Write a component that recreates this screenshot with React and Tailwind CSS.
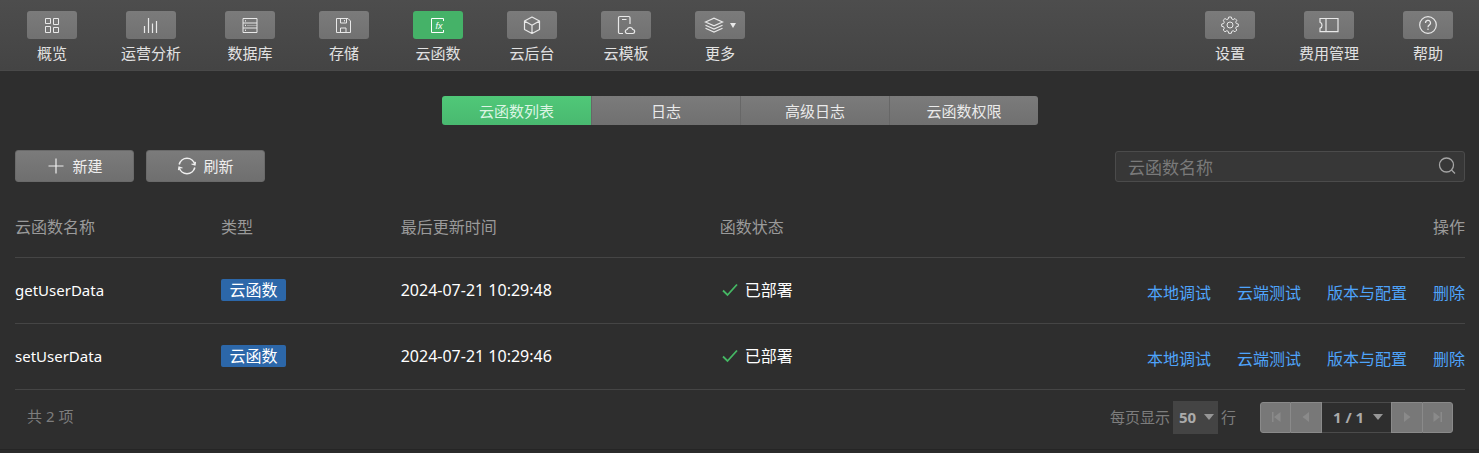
import React from "react";

function Icon({ children, className = "size-5", strokeWidth = 1 }) {
  return (
    <svg
      aria-hidden="true"
      viewBox="0 0 20 20"
      className={className}
      fill="none"
      stroke="currentColor"
      strokeWidth={strokeWidth}
    >
      {children}
    </svg>
  );
}

const icons = {
  overview: (
    <Icon>
      <path d="M3.500 3.500h5v5h-5zM11.500 3.500h5v6h-5zM3.500 11.500h5v6h-5zM11.500 12.500h5v5h-5z" />
    </Icon>
  ),
  analytics: (
    <Icon>
      <path d="M3.500 11v7M7.500 3v15M11.500 8.500V18M15.500 6v12" strokeWidth="1.200" />
    </Icon>
  ),
  database: (
    <Icon>
      <path d="M3 3.500h14v14H3zM3 8h14M3 13h14" />
      <path d="M5.500 5.200v1.300M5.500 9.800v1.300M5.500 14.600v1.300" />
      <path d="M7 10.500h10" strokeOpacity="0.400" />
    </Icon>
  ),
  storage: (
    <Icon>
      <path d="M2.500 3.500h11.500l2.500 2.500v11.500h-14zM6.500 3.500V8h6V3.500M6.500 17.500v-4.500h5.500v4.500M10.500 5v1.500" />
    </Icon>
  ),
  functions: (
    <Icon>
      <path d="M15.500 6V3.500h-12v14h12V15" />
      <text
        x="7.500"
        y="13.500"
        fontSize="9"
        fontStyle="italic"
        fontFamily="Liberation Sans, sans-serif"
        fill="currentColor"
        stroke="none"
      >
        fx
      </text>
    </Icon>
  ),
  backend: (
    <Icon strokeWidth={1.2}>
      <path d="M10 2l7.500 4v8.500L10 18.500l-7.500-4V6zM2.500 6l7.500 4.200L17.500 6M10 10.200v8.300" strokeLinejoin="round" />
    </Icon>
  ),
  template: (
    <Icon strokeWidth={1.2}>
      <path d="M7 18.500H3.800a1.300 1.300 0 0 1-1.300-1.300V2.800A1.300 1.300 0 0 1 3.800 1.500h8.900A1.300 1.300 0 0 1 14 2.800V9M6 4.500h4.500" />
      <path d="M11.500 18.500a2 2 0 0 1-.3-4 2.900 2.900 0 0 1 5.600 0 2 2 0 0 1-.3 4z" />
    </Icon>
  ),
  more: (
    <Icon strokeWidth={1.2}>
      <path d="M1.500 7L10 3.200 18.500 7 10 10.800zM1.500 10.200L10 14l8.500-3.800M1.500 13.200L10 17l8.500-3.800" />
    </Icon>
  ),
  settings: (
    <Icon>
      <circle cx="10" cy="10" r="3" />
      <path
        strokeLinejoin="round"
        d="M8.700 2h2.600l.5 2 1.400.6 1.800-1.100 1.800 1.800-1.100 1.800.6 1.400 2 .5v2.300l-2 .5-.6 1.400 1.100 1.800-1.800 1.800-1.800-1.100-1.400.6-.5 2H8.700l-.5-2-1.400-.6L5 16.800 3.200 15l1.100-1.800-.6-1.400-2-.5V9l2-.5.6-1.400-1.100-1.800L5 3.500l1.800 1.100L8.200 4z"
      />
    </Icon>
  ),
  billing: (
    <Icon strokeWidth={1.2}>
      <path d="M1 3.500h18v13.200H1v-3.500a3 3 0 0 0 2-3 3 3 0 0 0-2-3zM7 3.500v13.200" />
    </Icon>
  ),
  help: (
    <Icon strokeWidth={1.2}>
      <circle cx="10" cy="10" r="8.300" />
      <path d="M7.500 8a2.500 2.500 0 1 1 3.700 2.100c-.9.500-1.200 1-1.200 2.100M10 13.400v1.500" />
    </Icon>
  ),
};

const mainNav = [
  { icon: "overview", label: "概览" },
  { icon: "analytics", label: "运营分析" },
  { icon: "database", label: "数据库" },
  { icon: "storage", label: "存储" },
  { icon: "functions", label: "云函数", active: true },
  { icon: "backend", label: "云后台" },
  { icon: "template", label: "云模板" },
  { icon: "more", label: "更多", menu: true },
];

const sideNav = [
  { icon: "settings", label: "设置" },
  { icon: "billing", label: "费用管理" },
  { icon: "help", label: "帮助" },
];

function NavItem({ icon, label, active, menu }) {
  return (
    <button
      type="button"
      aria-current={active ? "page" : undefined}
      className="flex shrink-0 flex-col items-center gap-1 text-[15px] leading-5 text-[#e2e2e2]"
    >
      <span
        className={
          active
            ? "flex h-7 w-[50px] items-center justify-center rounded-[3px] bg-[#45b268] text-white"
            : "flex h-7 w-[50px] items-center justify-center rounded-[3px] bg-linear-to-b from-[#7b7b7b] to-[#717171] text-[#e8e8e8]"
        }
      >
        {icons[icon]}
        {menu && (
          <svg aria-hidden="true" viewBox="0 0 6 5" className="ml-1.5 h-[5px] w-1.5" fill="currentColor">
            <path d="M0 0h6L3 5z" />
          </svg>
        )}
      </span>
      <span className="whitespace-nowrap">{label}</span>
    </button>
  );
}

const tabs = ["云函数列表", "日志", "高级日志", "云函数权限"];

const rows = [
  { name: "getUserData", type: "云函数", updated: "2024-07-21 10:29:48", status: "已部署" },
  { name: "setUserData", type: "云函数", updated: "2024-07-21 10:29:46", status: "已部署" },
];

const actions = ["本地调试", "云端测试", "版本与配置", "删除"];

function Caret({ className }) {
  return (
    <svg
      aria-hidden="true"
      viewBox="0 0 10 6"
      className={"pointer-events-none absolute top-1/2 h-1.5 w-2.5 -translate-y-1/2 " + className}
      fill="#969696"
    >
      <path d="M0 0h10L5 6z" />
    </svg>
  );
}

function PageButton({ label, d, className }) {
  return (
    <button
      type="button"
      disabled
      aria-label={label}
      className={"flex items-center justify-center border-[#8a8a8a] bg-[#787878] text-[#8a8a8a] " + className}
    >
      <svg aria-hidden="true" viewBox="0 0 10 10" className="size-2.5" fill="currentColor">
        <path d={d} />
      </svg>
    </button>
  );
}

const toolButton =
  "flex h-8 w-[119px] items-center justify-center gap-1.5 rounded-[3px] border border-[#6a6a6a] bg-linear-to-b from-[#7b7b7b] to-[#6f6f6f] text-[15px] leading-5 text-[#eeeeee]";

export default function App() {
  return (
    <div className="flex min-h-screen flex-col bg-[#2e2e2e] font-['Noto_Sans','Noto_Sans_CJK_SC',sans-serif] text-white">
      <header className="flex justify-between border-b border-[#494949] bg-linear-to-b from-[#4d4d4d] to-[#444444] pt-[11px] pr-[26px] pb-[7px] pl-[27px]">
        <nav className="flex gap-11">
          {mainNav.map((item) => (
            <NavItem key={item.label} {...item} />
          ))}
        </nav>
        <nav className="flex gap-11">
          {sideNav.map((item) => (
            <NavItem key={item.label} {...item} />
          ))}
        </nav>
      </header>

      <main className="flex flex-col pt-[25px] pr-[14px] pb-[15px] pl-[15px]">
        <div
          role="tablist"
          className="grid h-[29px] w-full max-w-[596px] grid-cols-4 self-center overflow-hidden rounded-[3px]"
        >
          {tabs.map((tab, i) => (
            <button
              key={tab}
              type="button"
              role="tab"
              aria-selected={i === 0}
              className={
                i === 0
                  ? "bg-linear-to-b from-[#50c878] to-[#49b970] text-[15px] leading-5 text-[#dcf5e4]"
                  : "border-l border-[#676767] bg-linear-to-b from-[#7b7b7b] to-[#707070] text-[15px] leading-5 text-[#eaeaea]"
              }
            >
              {tab}
            </button>
          ))}
        </div>

        <div className="mt-[25px] flex items-center justify-between">
          <div className="flex gap-3">
            <button type="button" className={toolButton}>
              <Icon strokeWidth={1.2}>
                <path d="M2.500 10h15M10 2.500v15" />
              </Icon>
              新建
            </button>
            <button type="button" className={toolButton}>
              <Icon strokeWidth={1.6}>
                <path d="M2.200 8.500A8 8 0 0 1 17.800 8.500M17.800 11.500A8 8 0 0 1 2.200 11.500" />
                <path d="M14.500 8l3.500.9.500-3M5.500 12l-3.500-.9-.5 3" strokeWidth="1.200" />
              </Icon>
              刷新
            </button>
          </div>
          <label className="flex h-[31px] w-[350px] items-center rounded-[3px] border border-[#4b4b4b] bg-[#373737] pr-[7px] pl-3">
            <input
              type="text"
              aria-label="云函数名称"
              placeholder="云函数名称"
              className="min-w-0 flex-1 bg-transparent pt-1 text-[17px] leading-6 text-white outline-none placeholder:text-[#7a7a7a]"
            />
            <Icon className="size-5 text-[#a5a5a5]" strokeWidth={1.3}>
              <circle cx="9.500" cy="9" r="7" />
              <path d="M14.500 14l3.500 3.500" />
            </Icon>
          </label>
        </div>

        <table className="mt-[15px] w-full table-fixed border-collapse text-left text-base leading-6">
          <colgroup>
            <col className="w-[14.2%]" />
            <col className="w-[12.4%]" />
            <col className="w-[22%]" />
            <col className="w-[22%]" />
            <col />
          </colgroup>
          <thead>
            <tr className="h-[60px] border-b border-[#454545] text-[#9a9a9a]">
              <th className="font-normal">云函数名称</th>
              <th className="font-normal">类型</th>
              <th className="font-normal">最后更新时间</th>
              <th className="font-normal">函数状态</th>
              <th className="text-right font-normal">操作</th>
            </tr>
          </thead>
          <tbody>
            {rows.map((row) => (
              <tr key={row.name} className="h-[66px] border-b border-[#454545]">
                <td className="text-[15px]">{row.name}</td>
                <td>
                  <span className="flex h-[22px] w-[65px] items-center justify-center rounded-xs bg-[#2c67a9]">
                    {row.type}
                  </span>
                </td>
                <td>{row.updated}</td>
                <td>
                  <span className="flex items-center gap-[5px]">
                    <Icon className="size-5 text-[#45b864]" strokeWidth={1.8}>
                      <path d="M3 10.500l4.500 4.500L17 4.500" />
                    </Icon>
                    {row.status}
                  </span>
                </td>
                <td className="pt-1.5">
                  <div className="flex justify-end gap-[26px]">
                    {actions.map((action) => (
                      <a key={action} href="#" className="whitespace-nowrap text-[#4ea4fb]">
                        {action}
                      </a>
                    ))}
                  </div>
                </td>
              </tr>
            ))}
          </tbody>
        </table>

        <footer className="flex items-center justify-between px-3 pt-[11px] text-[15px] leading-5 text-[#7d7d7d]">
          <p className="pb-0.5">共 2 项</p>
          <div className="flex items-center gap-6">
            <label className="flex items-center gap-[3px]">
              每页显示
              <span className="relative">
                <select
                  defaultValue="50"
                  className="h-[33px] w-[45px] appearance-none bg-[#444444] pl-1.5 font-bold text-[#ababab]"
                >
                  <option>50</option>
                </select>
                <Caret className="right-1" />
              </span>
              行
            </label>
            <div className="flex h-[31px]">
              <PageButton label="第一页" d="M1 0h1.500v10H1zM9.500 0v10L3 5z" className="w-[31px] rounded-l-[3px] border" />
              <PageButton label="上一页" d="M8 0v10L1.500 5z" className="w-[31px] border border-l-0" />
              <span className="relative flex border-y border-[#4b4b4b]">
                <select
                  aria-label="页码"
                  defaultValue="1 / 1"
                  className="w-[69px] appearance-none bg-[#2e2e2e] pl-[11px] font-bold text-[#ababab]"
                >
                  <option>1 / 1</option>
                </select>
                <Caret className="right-2" />
              </span>
              <PageButton label="下一页" d="M2 0v10l6.500-5z" className="w-[31px] border border-r-0" />
              <PageButton label="最后一页" d="M7.500 0H9v10H7.500zM.5 0v10L7 5z" className="w-[31px] rounded-r-[3px] border" />
            </div>
          </div>
        </footer>
      </main>
      <div className="flex-1 border-t border-[#252525] bg-[#2b2b2b]" />
    </div>
  );
}
